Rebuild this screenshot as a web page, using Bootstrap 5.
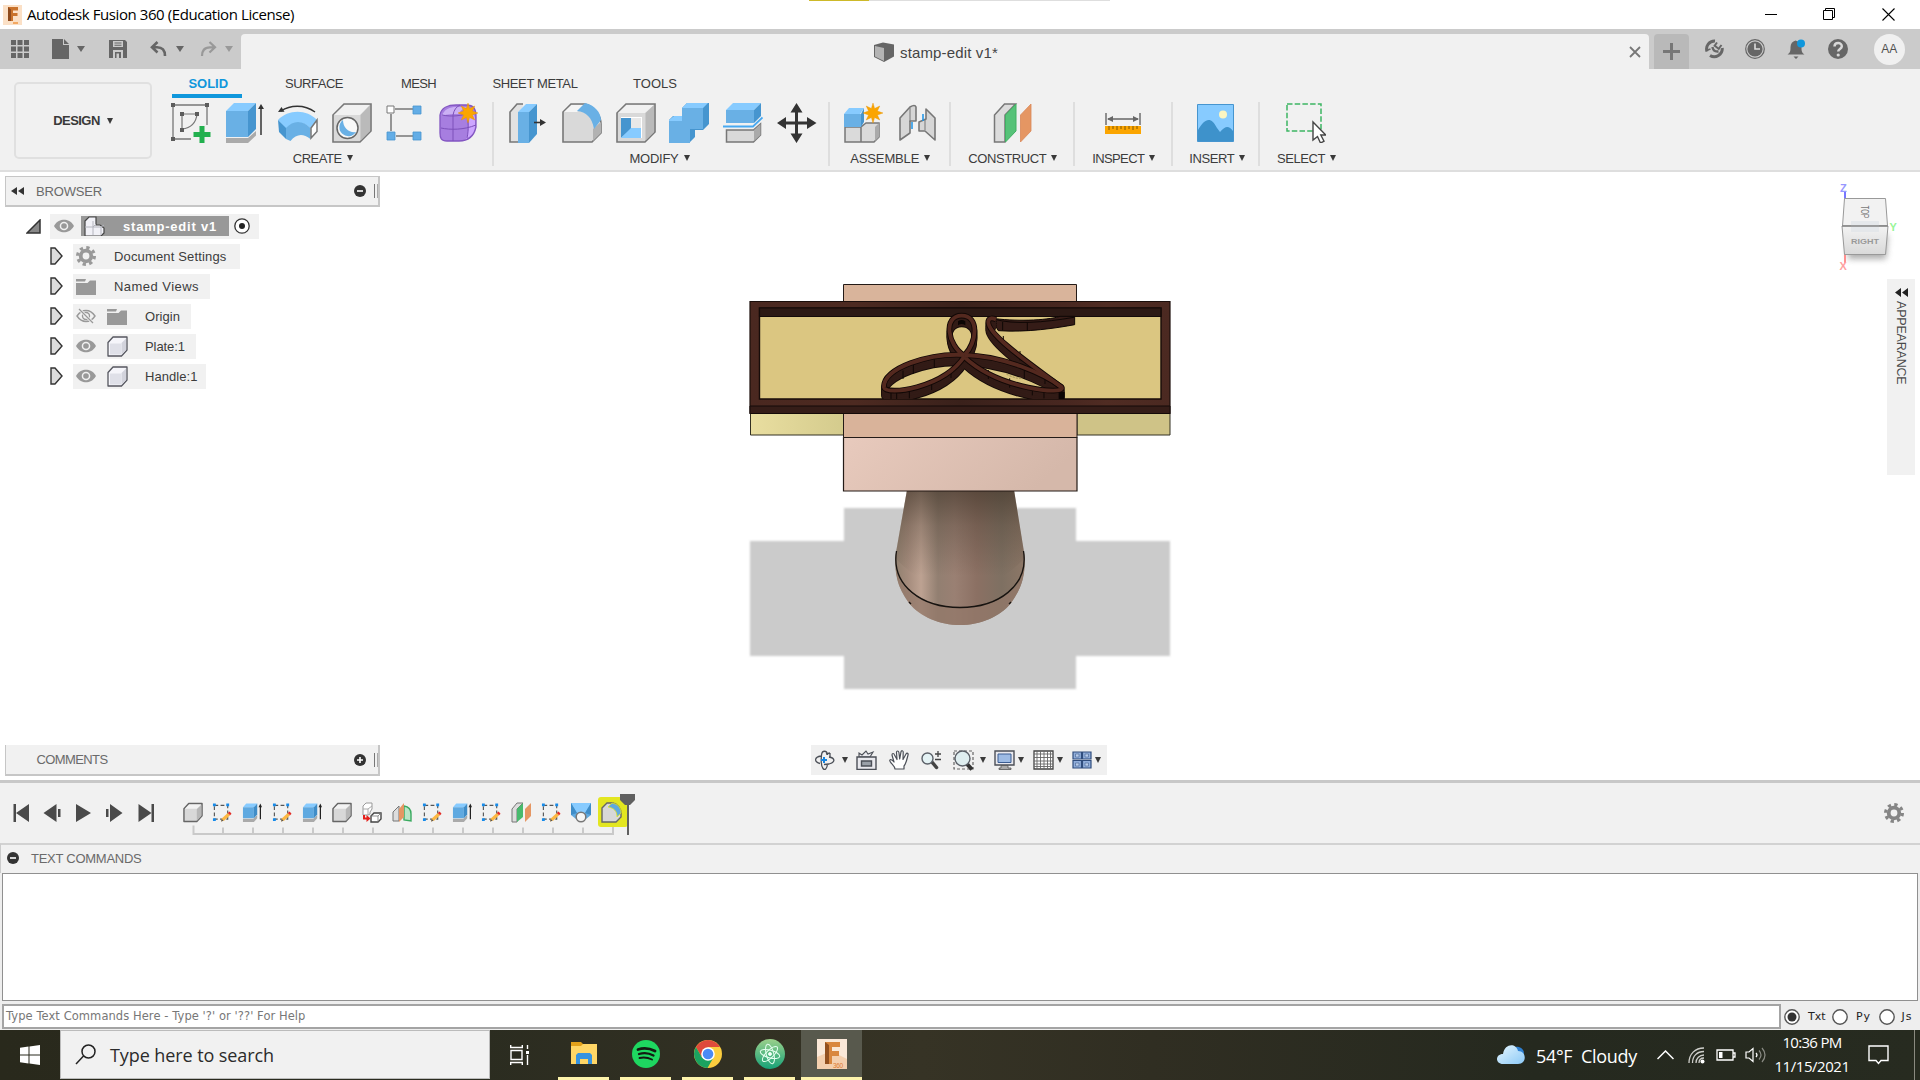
<!DOCTYPE html>
<html lang="en">
<head>
<meta charset="utf-8">
<title>Autodesk Fusion 360 (Education License)</title>
<link rel="stylesheet" href="https://cdn.jsdelivr.net/npm/bootstrap@5.3.0/dist/css/bootstrap.min.css">
<style>
body{width:1920px;height:1080px;overflow:hidden;background:#fff;font-family:"Liberation Sans",Arial,sans-serif;font-size:13px;line-height:1;color:#3c3c3c}
svg{display:block;flex:none}
.fit{white-space:pre;display:inline-block;flex:none}
.segoe{font-family:"Open Sans","Noto Sans",sans-serif}
.caret{width:0;height:0;flex:none;border:3.5px solid transparent;border-top:6px solid #3a3a3a;border-bottom:0}
.titlebar{height:29px;padding-left:3px;color:#000;font-size:15px}
.load-strip{left:809px;width:301px;height:1px;background:linear-gradient(90deg,#cdb929 60px,#dedede 60px)}
.winbtns{gap:46px;padding-right:25px}
.appbar{height:40px;background:#cbcbcb;color:#666}
.quick{width:241px;padding:0 0 1px 11px}
.quick .caret{border-top-color:#666;border-left-width:4px;border-right-width:4px}
.quick .dim{border-top-color:#999!important}
.doctab{width:1408px;height:35px;background:#f1f1f1;border-radius:4px 4px 0 0;font-size:15px;color:#444;padding-left:633px;padding-right:8px}
.newtab{width:35px;height:35px;margin-left:5px;background:#b9b9b9;border-radius:4px 4px 0 0}
.tabright{gap:21.2px;padding:0 0 0 15px;height:40px}
.avatar{width:31px;height:31px;background:#f0f0f0;margin-left:5px;font-size:12px;color:#505050}
.ribbon{height:103px;background:#f1f1f1;border-bottom:2px solid #dedede;padding-left:14px}
.design{width:138px;height:77px;margin-top:13px;border:2px solid #e0e0e0;border-radius:5px;gap:7px;font-weight:bold;color:#3a3a3a}
.ribtabs{height:29px;padding-left:20px}
.ribtabs .tab-on{color:#0f97dc;font-weight:bold;border-bottom:4px solid #0f97dc;width:70px;height:29px;padding:7.500px 0 0 16.5px}
.ribtabs .tab-off{padding-top:7.500px}
.tools{margin-top:4px}
.tgroup{height:64px;border-right:2px solid #dedede;width:var(--gw)}
.tgroup:last-child{border:0}
.tgroup .glyphs{height:42px;gap:13.7px;padding-top:1px}
.tgroup .gname{gap:5px;height:28px;padding-left:2px}
.viewport3d{height:608px;background:#fff}
.model{left:740px;top:98px}
.leftcol{width:375px;margin-left:5px;padding:4px 0 4px}
.panelhead{height:31px;background:#f1f1f1;border:1px solid #c6c6c6;border-width:1px 2px 2px 1px;color:#6a6a6a;padding-right:0}
.grip{width:4px;height:14px;border-left:1px solid #777;border-right:1px solid #aaa}
.tree{margin-top:6.500px;gap:5px}
.tree .trow{height:25px}
.tree .fit{padding-top:1px}
.tree .tbg{background:#f1f1f1;height:25px;padding-left:3px;width:var(--bw)}
.rootname{background:#989898;color:#fff;font-weight:bold;height:20px;width:148px;padding-left:3px}
.navbar3d{width:296px;height:30px;background:#f0f0f0;left:811px;top:573px}
.navbar3d .caret{border-left-width:3px;border-right-width:3px}
.viewcube{left:1830px;top:8px}
.appear{left:1887px;top:107px;width:28px;height:196px;background:#f1f1f1;padding-top:9px}
.appear .vert{writing-mode:vertical-rl;font-size:12.5px;letter-spacing:-.2px;color:#4a4a4a;margin-top:4px}
.timeline{height:63px;background:#f1f1f1;border-top:3px solid #c8c8c8}
.transport{padding:21px 0 0 13px;width:181px}
.steps{padding-top:18.500px}
.steps .icons{height:21px;gap:9.9px;padding-left:1.500px}
.feature-hl{width:30px;height:30px;background:#e3e620;border-radius:3px;left:417px;top:14px}
.cmdhead{height:30px;background:#f1f1f1;border-top:2px solid #d2d2d2;border-left:1px solid #ccc;color:#6a6a6a;padding:0 0 2px 6px}
.cmdwrap{height:157px;background:#eee;padding:0 2px}
.cmdout{height:128px;background:#fff;border:1.500px solid #909090}
.cmdin{height:25px;margin-top:3px}
.cmdline{width:1779px;height:25px;background:#fff;border:2px solid #a4a4a4;color:#777;padding:1px 0 0 2px;font-family:"DejaVu Sans",sans-serif;font-size:11.5px}
.opt{font-family:"DejaVu Sans",sans-serif;font-size:11px;color:#222}
.taskbar{height:50px;background:linear-gradient(90deg,#29291c,#2b2c20 25%,#363325 48%,#302e22 60%,#25291f 80%,#272b20)}
.search{width:430px;height:49px;background:#f1f1f1;border:1px solid #bbb;color:#2b2b2b;font-size:18px;padding-left:14px;gap:14px;margin-left:20px}
.app{width:51px;height:50px;border-bottom:3px solid #fdf3ab;padding-bottom:0}
.app-on{width:61px;background:#58594d}
.tray{color:#fff;font-size:18px}
.clock{font-size:15px;gap:9px;width:76px}
</style>
<script src="https://cdn.jsdelivr.net/npm/bootstrap@5.3.0/dist/js/bootstrap.bundle.min.js"></script>
</head>
<body class="d-flex flex-column">
<svg width="0" height="0" class="position-absolute">
<defs>
<symbol id="i-star" viewBox="0 0 20 20"><path d="M10 0l1.600 5.500L16.800 3l-2.400 5L20 10l-5.600 2 2.400 5-5.200-2.500L10 20l-1.600-5.500L3.200 17l2.400-5L0 10l5.600-2-2.400-5 5.200 2.500z" fill="#fba500" stroke="#e59200" stroke-width=".4"/></symbol>
<symbol id="i-eye" viewBox="0 0 20 14"><path d="M0 7C3 2 6.500.8 10 .8S17 2 20 7c-3 5-6.500 6.200-10 6.200S3 12 0 7z" fill="#999"/><circle cx="10" cy="7" r="4.300" fill="#f1f1f1"/><circle cx="10" cy="7" r="2.800" fill="#999"/></symbol>
<symbol id="i-eyeoff" viewBox="0 0 20 16"><path d="M1 8c3-4.500 6-5.500 9-5.500S16 3.500 19 8c-3 4.500-6 5.500-9 5.500S4 12.500 1 8z" fill="none" stroke="#999" stroke-width="1.400"/><circle cx="10" cy="8" r="3.500" fill="none" stroke="#999" stroke-width="1.400"/><path d="M3 1l14 14" stroke="#f1f1f1" stroke-width="3"/><path d="M3 1l14 14" stroke="#999" stroke-width="1.300"/></symbol>
<symbol id="i-folder" viewBox="0 0 20 17"><path d="M0 5h11.500L14 2.500h6V17H0z" fill="#999"/><path d="M0 1h10l-1 2.500H0z" fill="#999"/></symbol>
<symbol id="i-gear" viewBox="0 0 20 20"><circle cx="10" cy="10" r="8.400" fill="none" stroke="currentColor" stroke-width="3.200" stroke-dasharray="3.300 3.300"/><circle cx="10" cy="10" r="5.300" fill="none" stroke="currentColor" stroke-width="3.800"/></symbol>
<symbol id="i-body" viewBox="0 0 21 21"><path d="M1 6.500L6 1h14v13l-5.500 6H1z" fill="#f5f5fa" stroke="#55565f" stroke-width="1.300" stroke-linejoin="round"/><path d="M3 7.500h11v11H3z" fill="#dfe0e8"/><path d="M14.500 7v12L19 14V2.500z" fill="#d2d3dc"/></symbol>
<symbol id="i-box" viewBox="0 0 21 21"><path d="M1 6.500L6 1h14v13l-5.500 6H1z" fill="#d8d8d8" stroke="#666" stroke-width="1.500" stroke-linejoin="round"/><path d="M2 6.500L6.500 2H19l-4.500 4.500z" fill="#f3f3f3"/><path d="M14.500 7v12.500L19.300 14V2.500z" fill="#b7b7b7"/></symbol>
<symbol id="i-tri" viewBox="0 0 13 18"><path d="M1 1h4l7 8-7 8H1z" fill="#dcdcdc" stroke="#333" stroke-width="1.400"/></symbol>
<symbol id="i-tsketch" viewBox="0 0 21 21"><rect x="2.500" y="3" width="14" height="14.500" fill="none" stroke="#555" stroke-width="1.200" stroke-dasharray="4 2.500"/><path d="M1 1h3v3H1zM15 1h3v3h-3zM1 16.500h3v3H1z" fill="#168bea"/><path d="M9.500 20l1-3.500 6-5.500 2.500 2.500-6 5.500z" fill="#fbb743"/><path d="M16.500 11l2-1.500 2 2.200L19 13.500z" fill="#e42b25"/><path d="M9.500 20l.8-2.600 1.800 1.800z" fill="#555"/></symbol>
<symbol id="i-textrude" viewBox="0 0 21 21"><path d="M1 17h11l4-4v3.500L12.500 20.500H1z" fill="#aaa"/><path d="M1 5L4.500 1H16L12.500 5z" fill="#87cbff"/><path d="M1 5h11.500v11.500H1z" fill="#5fa9e0"/><path d="M12.500 5L16 1v11.500l-3.500 4z" fill="#3f8dc8"/><path d="M19.300 4v13.500" stroke="#222" stroke-width="1.300"/><path d="M17.300 5l2-4 1.700 4z" fill="#222"/></symbol>
</defs>
</svg>

<header class="titlebar d-flex align-items-center position-relative">
  <div class="load-strip position-absolute top-0"></div>
  <svg width="19" height="20" viewBox="0 0 19 20"><rect width="19" height="20" fill="#fbe0c6"/><path d="M5 2h10v3.500h-5v2.500h4.500V11H10v5H5z" fill="#c9722b"/><path d="M5 2l3 2.500V16H5z" fill="#8d4a1d"/><path d="M10 17h5v2h-5z" fill="#f3a862"/></svg>
  <span class="fit segoe ms-1" style="padding-left:1px" data-w="267">Autodesk Fusion 360 (Education License)</span>
  <div class="winbtns d-flex ms-auto align-items-center">
    <svg width="13" height="13" viewBox="0 0 13 13"><path d="M1 6h12v1H1z"/></svg>
    <svg width="13" height="13" viewBox="0 0 13 13" fill="none" stroke="#000"><path d="M.5 2.500h9v9h-9zM2.500 2.500v-2h9v9h-2"/></svg>
    <svg width="13" height="13" viewBox="0 0 13 13" stroke="#000" stroke-width="1.100"><path d="M.5.500l12 12M12.500.500l-12 12"/></svg>
  </div>
</header>

<nav class="appbar d-flex align-items-end">
  <div class="quick d-flex align-items-center h-100">
    <svg width="18" height="18" viewBox="0 0 18 18" fill="#666"><path d="M0 0h5v5H0zM6.500 0h5v5h-5zM13 0h5v5h-5zM0 6.500h5v5H0zM6.500 6.500h5v5h-5zM13 6.500h5v5h-5zM0 13h5v5H0zM6.500 13h5v5h-5zM13 13h5v5h-5z"/></svg>
    <svg style="margin-left:23px" width="17" height="20" viewBox="0 0 17 20" fill="#666"><path d="M0 0h11v6h6v14H0zM12 0l5 5h-5z"/></svg>
    <span class="caret ms-2"></span>
    <svg style="margin-left:23.500px" width="18" height="18" viewBox="0 0 18 18"><path d="M0 0h16l2 2v16H0z" fill="#666"/><path d="M4 1h10v6H4zM4 10h10v8H4z" fill="#cbcbcb"/><path d="M5.500 2.500h7v1h-7zM5.500 4.700h7v1h-7zM6 12h6v6H6z" fill="#666"/><path d="M7.500 13.500H10V18H7.500z" fill="#cbcbcb"/></svg>
    <svg style="margin-left:23px" width="17" height="16" viewBox="0 0 17 16" fill="none" stroke="#666" stroke-width="2.600"><path d="M7.500 1L2 6.300l5.500 5.200M2 6.300h5C13 6.300 15 9.500 15 15"/></svg>
    <span class="caret" style="margin-left:9px"></span>
    <svg class="ms-3" width="17" height="16" viewBox="0 0 17 16" fill="none" stroke="#999" stroke-width="2.200"><path d="M9.500 1L15 6.300l-5.500 5.200M15 6.300h-5C4 6.300 2 9.500 2 15"/></svg>
    <span class="caret dim ms-2"></span>
  </div>
  <div class="doctab d-flex align-items-center">
    <svg width="20" height="20" viewBox="0 0 20 20"><path d="M0 3l9-2.500L20 2.500v12L10 20 0 15z" fill="#666"/><path d="M1 4l9 2v13l-9-4.500z" fill="#b4b4b4"/></svg>
    <span class="fit" style="margin-left:6px;padding-top:1px" data-w="98">stamp-edit v1*</span>
    <svg class="ms-auto" width="12" height="12" viewBox="0 0 12 12" stroke="#777" stroke-width="1.800"><path d="M1 1l10 10M11 1L1 11"/></svg>
  </div>
  <div class="newtab d-flex align-items-center justify-content-center"><svg width="17" height="17" viewBox="0 0 17 17" fill="#777"><path d="M7 0h3v7h7v3h-7v7H7v-7H0V7h7z"/></svg></div>
  <div class="tabright d-flex align-items-center">
    <svg width="20" height="20" viewBox="0 0 20 20" fill="none" stroke="#666"><path d="M3 12.500A8 8 0 0 1 11 2M6 16.500A8 8 0 0 0 18.200 9" stroke-width="3"/><path d="M10.500 6.500l5 4M13 3.500l-3 4M17.500 6l-3 4" stroke-width="2"/><path d="M2 11.500l4.500-1.500" stroke-width="1.600"/><path d="M8.500 8q.5 5 6 4.500" stroke-width="2.400"/></svg>
    <svg width="20" height="20" viewBox="0 0 20 20"><circle cx="10" cy="10" r="9.300" fill="none" stroke="#666" stroke-width="1.200"/><circle cx="10" cy="10" r="7.600" fill="#666"/><path d="M10 4.500V10h5" stroke="#ddd" stroke-width="1.600" fill="none"/></svg>
    <svg width="20" height="20" viewBox="0 0 20 20"><path d="M1.500 15.500c3-2 3-4 3-7.500 0-3.500 2-5.500 5-6.500 3.500 1 6 3 6 6.500s0 5.500 3 7.500zM7.500 17.500h5L10 20z" fill="#666"/><circle cx="15" cy="4.500" r="4" fill="#0f97dc"/></svg>
    <svg width="20" height="20" viewBox="0 0 20 20"><circle cx="10" cy="10" r="10" fill="#666"/><path d="M6.500 7.500C6.500 3 13.800 3 13.800 7.300c0 2.700-3.600 2.700-3.600 5.200" fill="none" stroke="#d8d8d8" stroke-width="2.500"/><circle cx="10.200" cy="16" r="1.600" fill="#d8d8d8"/></svg>
    <div class="avatar rounded-circle d-flex align-items-center justify-content-center">AA</div>
  </div>
</nav>

<section class="ribbon d-flex">
  <div class="design d-flex align-items-center justify-content-center"><span class="fit" data-w="46.500">DESIGN</span><span class="caret"></span></div>
  <div>
    <div class="ribtabs d-flex">
      <div class="tab-on"><span class="fit" data-w="39.500">SOLID</span></div>
      <div class="tab-off" style="margin-left:43px"><span class="fit" data-w="58">SURFACE</span></div>
      <div class="tab-off" style="margin-left:58px"><span class="fit" data-w="35">MESH</span></div>
      <div class="tab-off" style="margin-left:56.500px"><span class="fit" data-w="85">SHEET METAL</span></div>
      <div class="tab-off" style="margin-left:55.500px"><span class="fit" data-w="44">TOOLS</span></div>
    </div>
    <div class="tools d-flex">
      <div class="tgroup" style="--gw:341.500px">
        <div class="glyphs d-flex justify-content-center" style="padding-left:7px">
          <svg width="40" height="40" viewBox="0 0 40 40"><path d="M2 2h34v20M2 2v34h18" fill="none" stroke="#777" stroke-width="1.300"/><path d="M11 11h15C25 21 19 25 11 26z" fill="none" stroke="#777" stroke-width="1.200"/><path d="M0 0h4v4H0zM34 0h4v4h-4zM0 34h4v4H0zM9 9h4v4H9zM24 9h4v4h-4zM9 25h4v4H9z" fill="#5c5c5c"/><path d="M28.500 23h5v6h6v5h-6v6h-5v-6h-6v-5h6z" fill="#22b04e"/></svg>
          <svg width="40" height="40" viewBox="0 0 40 40"><path d="M1 35h22l8-7v4.500l-8 7.500H1z" fill="#aaa"/><path d="M1 8l8-8h22l-8 8z" fill="#87cbff"/><path d="M1 8h22v26H1z" fill="#69b0e5"/><path d="M23 8l8-8v26l-8 8z" fill="#4695cf"/><path d="M36 4v28" stroke="#333" stroke-width="1.500"/><path d="M33 6l3-5 3 5z" fill="#333"/></svg>
          <svg width="40" height="40" viewBox="0 0 40 40"><path d="M3 8C12 2 26 1 37 9" fill="none" stroke="#333" stroke-width="1.500"/><path d="M0 9l3.500-5 3 4.800z" fill="#333"/><path d="M0 17C10 6 29 6 39 17l-6.500 8C25 18 15 18 8 26z" fill="#87cbff"/><path d="M8 25c7-8 17-8 24.500 0v11c-8-6-14-5-20 2l-4.500-2z" fill="#69b0e5"/><path d="M0 17l8 8v11L1 29z" fill="#4695cf"/><path d="M39 17l-6 8v10l6-6.500z" fill="#fff" stroke="#777" stroke-width="1.500"/></svg>
          <svg width="40" height="40" viewBox="0 0 40 40"><path d="M1 12L12 1h27v27L28 39H1z" fill="#d9d9d9" stroke="#777" stroke-width="1.600"/><path d="M2 12L12.500 2H38L28 12z" fill="#f1f1f1"/><path d="M28.500 12L38 2v26l-9.500 9.500z" fill="#bababa"/><circle cx="15.500" cy="25" r="10.500" fill="#f8f8f8" stroke="#666" stroke-width="1.500"/><path d="M11 17a9 9 0 1 0 13 12C17 30 11 25 11 17z" fill="#69b0e5"/></svg>
          <svg width="40" height="40" viewBox="0 0 40 40"><path d="M9 6h18M5 11v17M10 33h17" stroke="#777" stroke-width="1.500"/><path d="M1 3h7v7H1z" fill="#fff" stroke="#777"/><path d="M27 3h8v8h-8zM1 29h8v8H1zM27 29h8v8h-8z" fill="#63ade6" stroke="#4695cf" stroke-width=".8"/></svg>
          <svg width="40" height="40" viewBox="0 0 40 40"><path d="M1 12C2 5 9 2 17 2h10c8 0 10 4 10 12v10c-2 9-8 14-17 14H8c-6 0-7-3-7-8z" fill="#a77ee0" stroke="#8356c2" stroke-width="1.300"/><path d="M3 13C5 6 11 4 17 4h12c-5 1-7 3-9 7-6 0-12 0-17 2z" fill="#cbb0f4"/><path d="M30 12c5-2 6 1 6 4v8c-1 6-4 9-9 12 3-6 3-16 3-24z" fill="#cda6ff"/><path d="M2 25c9 2 23 2 35-3M14 38V12c1-5 3-8 7-10M3 12c10 2 20 1 30-3M28 35c2-8 1-18 0-24" fill="none" stroke="#7c50ba" stroke-width="1"/><use href="#i-star" x="19" y="0" width="20" height="20"/></svg>
        </div>
        <div class="gname d-flex align-items-center justify-content-center"><span class="fit" data-w="49">CREATE</span><span class="caret"></span></div>
      </div>
      <div class="tgroup" style="--gw:336px">
        <div class="glyphs d-flex justify-content-center ps-1">
          <svg width="40" height="40" viewBox="0 0 40 40"><path d="M15 1H9L2 9v30h8" fill="#e2e2e2" stroke="#777" stroke-width="1.600"/><path d="M10 9l8-8h11l-8 8z" fill="#87cbff"/><path d="M10 9h11v31H10z" fill="#69b0e5"/><path d="M21 9l8-8v30l-8 9z" fill="#4695cf"/><path d="M26 19.500h7" stroke="#333" stroke-width="1.600"/><path d="M32 16l6 3.500-6 3.500z" fill="#333"/></svg>
          <svg width="40" height="40" viewBox="0 0 40 40"><path d="M1 9l8-8h14c10 3 16 12 16 20v9l-9 9H1z" fill="#d9d9d9" stroke="#777" stroke-width="1.600"/><path d="M2 9l7.500-7H22l-7 7z" fill="#f5f5f5"/><path d="M31 26l8-7v11l-8 8z" fill="#b2b2b2"/><path d="M15 8l8-8c10 2 16 10 16 17l-7 9C30 14 24 9 15 8z" fill="#69b0e5"/></svg>
          <svg width="40" height="40" viewBox="0 0 40 40"><path d="M1 10L10 1h29v28L29 39H1z" fill="#d9d9d9" stroke="#777" stroke-width="1.600"/><path d="M2 10l8.500-8H38l-9 8z" fill="#f1f1f1"/><path d="M29.500 10L38 2v27l-8.500 8.500z" fill="#bababa"/><path d="M5 14h21v21H5z" fill="#fff"/><path d="M5 15h10v11L5 35z" fill="#4695cf"/><path d="M15 25h10v10H5z" fill="#87cbff"/><path d="M15 15h10v10H15z" fill="#e8e8e8"/></svg>
          <svg width="40" height="40" viewBox="0 0 40 40"><path d="M0 17l4-4h9V5l5-5h22v21l-6 6h-8v7l-6 6H0z" fill="#4695cf"/><path d="M0 18h13V5h21v21H21v14H0z" fill="#69b0e5"/><path d="M13 5l5-5h21l-5 5zM0 17l5-4h8v5H0z" fill="#87cbff"/></svg>
          <svg width="40" height="40" viewBox="0 0 40 40"><path d="M3 7l7-7h28l-7 7z" fill="#87cbff"/><path d="M3 7h28v13H3z" fill="#69b0e5"/><path d="M31 7l7-7v13l-7 7z" fill="#4695cf"/><path d="M0 23.500h30l9.500-9" fill="none" stroke="#48a9f1" stroke-width="1.800"/><path d="M3.500 27h27l7-6v11l-7 7h-27z" fill="#d9d9d9" stroke="#777" stroke-width="1.500"/><path d="M31 27l6.500-6v11L31 38z" fill="#aaa"/></svg>
          <svg width="40" height="40" viewBox="0 0 40 40" fill="#333"><path d="M19.500 0l6 9.500H21V18.500h9V14l9.500 6-9.500 6v-4.500h-9V30.500h4.500l-6 9.500-6-9.500H18v-9H9V26L0 20l9-6v4.500h9V9.500h-4.500z"/></svg>
        </div>
        <div class="gname d-flex align-items-center justify-content-center pe-1"><span class="fit" data-w="49">MODIFY</span><span class="caret"></span></div>
      </div>
      <div class="tgroup" style="--gw:121.500px">
        <div class="glyphs d-flex justify-content-center" style="padding-left:3px">
          <svg width="40" height="40" viewBox="0 0 40 40"><path d="M1 24h16v15H1zM17 24l5-4h13v14l-5 5H17z" fill="#dadada" stroke="#777" stroke-width="1.500"/><path d="M31 24l4-4v14l-4 4z" fill="#aaa"/><path d="M0 11l5-6h15l-4 6z" fill="#87cbff"/><path d="M0 11h17v13H0z" fill="#69b0e5"/><path d="M17 11l3-6v14l-3 5z" fill="#4695cf"/><use href="#i-star" x="19" y="0" width="20" height="20"/></svg>
          <svg width="40" height="40" viewBox="0 0 40 40"><path d="M2 15L12 4q5-3 6 0v14h-6v12L2 37zM37 15L28 6v10l-7 3v9h6l10 9z" fill="#d6d6d6" stroke="#777" stroke-width="1.600" stroke-linejoin="round"/><path d="M12 5v14M27 17v10" stroke="#777"/><path d="M14 19v7M25 11v7" stroke="#1b93e6" stroke-width="1.500"/></svg>
        </div>
        <div class="gname d-flex align-items-center justify-content-center"><span class="fit" data-w="69">ASSEMBLE</span><span class="caret"></span></div>
      </div>
      <div class="tgroup" style="--gw:123.500px">
        <div class="glyphs d-flex justify-content-center"><svg width="40" height="40" viewBox="0 0 40 40"><path d="M13 39H2.500V12L12.500 1h11L13 12z" fill="#dcdcdc" stroke="#777" stroke-width="1.500"/><path d="M13.500 12L24 1v27L13.500 39z" fill="#56c278" stroke="#41b063"/><path d="M28.500 12L39 1v27L28.500 39z" fill="#e59663" stroke="#d98858" stroke-width=".8"/></svg></div>
        <div class="gname d-flex align-items-center justify-content-center"><span class="fit" data-w="78">CONSTRUCT</span><span class="caret"></span></div>
      </div>
      <div class="tgroup" style="--gw:98.500px">
        <div class="glyphs d-flex justify-content-center" style="padding-left:1px"><svg width="40" height="40" viewBox="0 0 40 40"><path d="M3 10v12M37 10v12M5 16h30" stroke="#666" stroke-width="1.400"/><path d="M4 16l6-3v6zM36 16l-6-3v6z" fill="#666"/><path d="M2 23h36v8H2z" fill="#fba500"/><path d="M6 23v4M10 23v3M14 23v4M18 23v3M22 23v4M26 23v3M30 23v4M34 23v3" stroke="#805600"/></svg></div>
        <div class="gname d-flex align-items-center justify-content-center"><span class="fit" data-w="52">INSPECT</span><span class="caret"></span></div>
      </div>
      <div class="tgroup" style="--gw:86.500px">
        <div class="glyphs d-flex justify-content-center"><svg width="37" height="40" viewBox="0 0 37 40"><path d="M.5 1.500h36v37H.5z" fill="#87cbff" stroke="#4695cf"/><path d="M1 27C8 15 14 13 20 25l3 4c6-7 9-6 13-1v10H1z" fill="#3e92cb"/><circle cx="26" cy="11.500" r="4" fill="#fcf6c2"/></svg></div>
        <div class="gname d-flex align-items-center justify-content-center" style="padding-left:4px"><span class="fit" data-w="45">INSERT</span><span class="caret"></span></div>
      </div>
      <div class="tgroup" style="--gw:92px">
        <div class="glyphs d-flex justify-content-center"><svg width="40" height="40" viewBox="0 0 40 40"><rect x="1" y="1" width="34" height="27" fill="none" stroke="#3db563" stroke-width="1.500" stroke-dasharray="5.500 2.200"/><path d="M27 19v18l4.500-3.500 3 6.500 3.500-1.700-3.200-6.300h5z" fill="#fff" stroke="#444" stroke-width="1.400"/></svg></div>
        <div class="gname d-flex align-items-center justify-content-center"><span class="fit" data-w="48">SELECT</span><span class="caret"></span></div>
      </div>
    </div>
  </div>
</section>

<main class="viewport3d position-relative d-flex">
  <svg class="model position-absolute" width="440" height="430" viewBox="740 270 440 430">
    <defs>
      <filter id="soft"><feGaussianBlur stdDeviation="1"/></filter>
      <linearGradient id="pink" x1="0" y1="0" x2="1" y2=".25"><stop offset="0" stop-color="#e8cabd"/><stop offset="1" stop-color="#d5b8aa"/></linearGradient>
      <linearGradient id="hnd"><stop offset="0" stop-color="#90806f"/><stop offset=".1" stop-color="#a58c7d"/><stop offset=".2" stop-color="#bda292"/><stop offset=".33" stop-color="#927f71"/><stop offset=".46" stop-color="#9a8073"/><stop offset=".63" stop-color="#8b7063"/><stop offset=".82" stop-color="#7e7062"/><stop offset="1" stop-color="#8d7767"/></linearGradient>
      <linearGradient id="hshade" x1="0" y1="0" x2="0" y2="1"><stop offset="0" stop-color="#3c3024" stop-opacity=".62"/><stop offset=".35" stop-color="#3c3024" stop-opacity=".28"/><stop offset=".85" stop-color="#3c3024" stop-opacity="0"/></linearGradient>
      <linearGradient id="wood"><stop offset="0" stop-color="#4a2820"/><stop offset=".25" stop-color="#4d2a21"/><stop offset=".5" stop-color="#3a211b"/><stop offset=".75" stop-color="#482720"/><stop offset=".85" stop-color="#502c23"/><stop offset="1" stop-color="#4b2921"/></linearGradient>
      <linearGradient id="yl"><stop offset="0" stop-color="#e9dea0"/><stop offset="1" stop-color="#d4cb8d"/></linearGradient>
      <clipPath id="inner"><path d="M0 20h700v277H0z"/></clipPath>
      <g id="sig" fill="none" stroke-linejoin="round">
        <path d="M284 168C230 135 220 47 275 47C330 47 320 130 284 165"/>
        <path d="M284 165C180 158 36 205 42 262C48 288 220 266 284 168"/>
        <path d="M284 165C400 168 520 220 575 262C590 286 390 270 284 172"/>
        <path d="M575 262C500 205 350 105 355 64C357 52 370 55 378 58"/>
      </g>
    </defs>
    <path d="M844 508h232v33h94v115h-94v33H844v-33h-94V541h94z" fill="#cbcbcb" filter="url(#soft)"/>
    <path d="M907 490h107l11 68C1025 580 1020 590 1011 603C1000 617 980 625 960 625S920 617 909 603C900 590 895 580 895 558z" fill="url(#hnd)"/>
    <path d="M907 490h107l11 68q-65 66-130 0z" fill="url(#hshade)"/>
    <path d="M895.500 556C892 590 924 607.500 960 607.500S1028 590 1024.500 556C1025 580 1020 590 1011 603C1000 617 980 625 960 625S920 617 909 603C900 590 895 580 895.500 556z" fill="#93786a" fill-opacity=".75"/>
    <path d="M896.500 551C891 586 922 607.500 960 607.500S1029 586 1023.500 551M909 602l2 2M1009 604l2-2" fill="none" stroke="#171310" stroke-width="1.300"/>
    <path d="M843.500 284.500h233V303h-233z" fill="#d9b49b" stroke="#241b17"/>
    <path d="M750.500 413.500h93v21.500h-93z" fill="url(#yl)" stroke="#333022"/><path d="M1077 413.500h93v21.500h-93z" fill="#cfc387" stroke="#333022"/>
    <path d="M843.500 437.500h233.500v53.500H843.500z" fill="url(#pink)" stroke="#241b17" stroke-width="1.200"/>
    <path d="M843.500 413.500h233.500v24H843.500z" fill="#d9b39a" stroke="#241b17"/>
    <path d="M750 301.500h420v112H750z" fill="url(#wood)" stroke="#1b0e0b" stroke-width="1.200"/>
    <path d="M750 406h420v7.500H750z" fill="#351d18" stroke="#140a08"/>
    <path d="M759.500 308h401.500v91H759.500z" fill="#dbc681" stroke="#180c09" stroke-width="1.400"/>
    <path d="M759.500 308h401.500v8.500H759.500z" fill="#2c1914" stroke="#140a08" stroke-width="1.200"/>
    <g transform="translate(870 300) scale(.3333)" clip-path="url(#inner)">
      <path d="M362 54C430 65 530 62 570 49H614V74C560 84 470 98 385 92z" fill="#351c17" stroke="#0f0705" stroke-width="3"/>
      <path d="M375 58C430 74 520 68 612 52M398 66v25M472 67v26" fill="none" stroke="#0f0705" stroke-width="3"/>
      <g stroke="#140a08" stroke-width="17"><use href="#sig" y="26"/><use href="#sig" y="20"/><use href="#sig" y="14"/><use href="#sig" y="7"/></g>
      <g stroke="#321b16" stroke-width="13"><use href="#sig" y="25"/><use href="#sig" y="20"/><use href="#sig" y="14"/><use href="#sig" y="7"/></g>
      <path d="M264 64q11-8 22 0v12q-11-8-22 0z" fill="#0b0504"/>
      <path d="M63 277v20M80 277v20M118 270v25M185 245v25M243 210v24M130 193v28M193 178v24M99 212v25M355 210v27M419 235v28M487 258v28M522 265v30M463 208v28M400 108v28M450 153v28M525 228v24" stroke="#100806" stroke-width="3"/>
      <path d="M566 276h18v22h-18z" fill="#0b0504"/>
      <use href="#sig" stroke="#120806" stroke-width="17"/>
      <use href="#sig" stroke="#54291f" stroke-width="11.500"/>
      <path d="M410 222q20 14 48 13" stroke="#b2a163" stroke-width="4" stroke-dasharray="7 3" fill="none"/>
    </g>
  </svg>

  <div class="leftcol d-flex flex-column position-relative">
    <div class="panelhead d-flex align-items-center">
      <svg class="ms-1" style="padding-left:1px" width="14" height="8" viewBox="0 0 13 8"><path d="M6 0v8L0 4zM13 0v8L7 4z" fill="#333"/></svg>
      <span class="fit" style="margin-left:12px" data-w="66">BROWSER</span>
      <svg class="ms-auto" width="12" height="12" viewBox="0 0 12 12"><circle cx="6" cy="6" r="6" fill="#333"/><path d="M3 5.200h6v1.600H3z" fill="#fff"/></svg>
      <span class="grip" style="margin-left:8px"></span>
    </div>
    <div class="tree d-flex flex-column">
      <div class="trow d-flex align-items-center" style="padding-left:21px">
        <svg width="15" height="15" viewBox="0 0 15 15"><path d="M1 14L14 1v13z" fill="#888" stroke="#333" stroke-width="1.500"/></svg>
        <div class="tbg d-flex align-items-center" style="--bw:209px;margin-left:9px">
          <svg style="margin-left:1px" width="20" height="14"><use href="#i-eye"/></svg>
          <div class="rootname d-flex align-items-center" style="margin-left:7px"><svg width="21" height="20" viewBox="0 0 21 20"><path d="M1 5l4-4h7v8h4l4 3v5l-3 3H1z" fill="#f1f1f7" stroke="#444" stroke-width="1.200"/><path d="M9 19v-8h8v8M1 11h8M9 5v6M9 11l3-3M17 11l3-2" fill="none" stroke="#b4b5be"/></svg><span class="fit" style="margin-left:18px" data-w="94">stamp-edit v1</span></div>
          <svg style="margin-left:5px" width="16" height="16" viewBox="0 0 16 16"><circle cx="8" cy="8" r="7.200" fill="#fff" stroke="#333" stroke-width="1.300"/><circle cx="8" cy="8" r="3" fill="#222"/></svg>
        </div>
      </div>
      <div class="trow d-flex align-items-center" style="padding-left:44.500px"><svg width="13" height="18"><use href="#i-tri"/></svg><div class="tbg d-flex align-items-center" style="--bw:167px;margin-left:10.500px"><svg width="20" height="20" color="#999"><use href="#i-gear"/></svg><span class="fit" style="margin-left:18px" data-w="112.500">Document Settings</span></div></div>
      <div class="trow d-flex align-items-center" style="padding-left:44.500px"><svg width="13" height="18"><use href="#i-tri"/></svg><div class="tbg d-flex align-items-center" style="--bw:137px;margin-left:10.500px"><svg width="20" height="17"><use href="#i-folder"/></svg><span class="fit" style="margin-left:18px" data-w="85">Named Views</span></div></div>
      <div class="trow d-flex align-items-center" style="padding-left:44.500px"><svg width="13" height="18"><use href="#i-tri"/></svg><div class="tbg d-flex align-items-center" style="--bw:118px;margin-left:10.500px"><svg width="20" height="16"><use href="#i-eyeoff"/></svg><svg style="margin-left:11px" width="20" height="17"><use href="#i-folder"/></svg><span class="fit" style="margin-left:18px" data-w="35">Origin</span></div></div>
      <div class="trow d-flex align-items-center" style="padding-left:44.500px"><svg width="13" height="18"><use href="#i-tri"/></svg><div class="tbg d-flex align-items-center" style="--bw:123px;margin-left:10.500px"><svg width="20" height="14"><use href="#i-eye"/></svg><svg style="margin-left:11px" width="21" height="21"><use href="#i-body"/></svg><span class="fit" style="margin-left:17px" data-w="40">Plate:1</span></div></div>
      <div class="trow d-flex align-items-center" style="padding-left:44.500px"><svg width="13" height="18"><use href="#i-tri"/></svg><div class="tbg d-flex align-items-center" style="--bw:133px;margin-left:10.500px"><svg width="20" height="14"><use href="#i-eye"/></svg><svg style="margin-left:11px" width="21" height="21"><use href="#i-body"/></svg><span class="fit" style="margin-left:17px" data-w="52.500">Handle:1</span></div></div>
    </div>
    <div class="panelhead d-flex align-items-center mt-auto border-top-0">
      <span class="fit" style="margin-left:30.500px" data-w="71">COMMENTS</span>
      <svg class="ms-auto" width="12" height="12" viewBox="0 0 12 12"><circle cx="6" cy="6" r="6" fill="#333"/><path d="M3 5.200h2.200V3h1.600v2.200H9v1.600H6.800V9H5.200V6.800H3z" fill="#fff"/></svg>
      <span class="grip" style="margin-left:8px"></span>
    </div>
  </div>

  <div class="navbar3d position-absolute d-flex align-items-center ps-1">
    <svg width="20" height="20" viewBox="0 0 20 20" fill="none" stroke="#4b4f57" stroke-width="1.300"><path d="M12.500 5C12 0 7 0 6.500 5S6 16 8 18.500s4 0 4.500-4.500M6 6C-1 7-1 12 5 13.500M14 7c6 1 7 5 0 7l-5 .5"/><path d="M9 7v6M6 10h6" stroke="#1685e0" stroke-width="2"/><path d="M11 4l4-1M15 3v4" /></svg>
    <span class="caret" style="margin-left:7px"></span>
    <svg style="margin-left:7.500px" width="21" height="20" viewBox="0 0 21 20" fill="#e9e9ee" stroke="#4b4f57" stroke-width="1.400"><path d="M3 7V3l3 2 4-4 2 3 5-2-3 5z" stroke-width="1.100"/><path d="M1 7h19v12.500H1z"/><path d="M5.500 11h10v5h-10z" fill="#9aa0a8"/></svg>
    <svg style="margin-left:12px" width="21" height="20" viewBox="0 0 21 20" fill="#fff" stroke="#4b4f57" stroke-width="1.200" stroke-linejoin="round"><path d="M6 19c0-3-5-6-5.300-8.500C1 9 3 9.500 5 12L3 5c0-2 2-2 2.500 0L8 9.500 7.500 2.500c0-2 2-2 2.400 0l.8 6.500L12 1.800c.3-1.700 2.300-1.300 2.200.5L14 9.500 17 4c1-1.500 2.500-.5 2 1-1 4-2 9-4 11v3z"/></svg>
    <svg style="margin-left:11.500px" width="21" height="20" viewBox="0 0 21 20" fill="none"><path d="M10.500 11.500l5 6" stroke="#444" stroke-width="3.500" stroke-linecap="round"/><circle cx="6.500" cy="8.500" r="5.500" fill="#e4f2f4" stroke="#5b6068" stroke-width="1.400"/><path d="M17 1v6M14 4h6M14 9.500h6" stroke="#444" stroke-width="1.300"/></svg>
    <svg style="margin-left:11px" width="21" height="21" viewBox="0 0 21 21" fill="none"><path d="M1 1h19v18H1z" stroke="#666" stroke-width="1.200" stroke-dasharray="3 2"/><path d="M14 14l5 5.500" stroke="#333" stroke-width="4"/><circle cx="9.500" cy="8.500" r="7.500" fill="#dfeef0" stroke="#5b6068" stroke-width="1.400"/></svg>
    <span class="caret" style="margin-left:6px"></span>
    <svg style="margin-left:8px" width="21" height="20" viewBox="0 0 21 20"><path d="M1 1h19v14H1z" fill="#e9e9ee" stroke="#4b4f57" stroke-width="1.400"/><path d="M4 4h13v8.500H4z" fill="#9dbbe4" stroke="#3b5d92"/><path d="M7 15.500h7V18h3v1.500H5V18h2z" fill="#aaa" stroke="#555" stroke-width=".8"/></svg>
    <span class="caret" style="margin-left:3px"></span>
    <svg style="margin-left:9px" width="21" height="20" viewBox="0 0 21 20"><path d="M1 1h19v18H1z" fill="#fff" stroke="#444" stroke-width="1.300"/><path d="M4 1v18M7.500 1v18M11 1v18M14.500 1v18M17.500 1v18M1 4h19M1 7.500h19M1 11h19M1 14h19M1 16.500h19" stroke="#666" stroke-width=".9"/></svg>
    <span class="caret" style="margin-left:3px"></span>
    <svg style="margin-left:8.500px" width="20" height="18" viewBox="0 0 20 18" fill="#91aedb" stroke="#304d7d" stroke-width="1.200"><path d="M1 1h8.500v7H1zM10.500 1H19v7h-8.500zM1 9.500h8.500v7.500H1zM10.500 9.500H19V17h-8.500z"/><path d="M3.500 3h3.500v3H3.500zM13 3h3.500v3H13zM3.500 12h3.500v3H3.500zM13 12h3.500v3H13z" fill="#b8cdec" stroke-width=".5"/></svg>
    <span class="caret" style="margin-left:3px"></span>
  </div>

  <svg class="viewcube position-absolute" width="76" height="96" viewBox="1830 180 76 96" font-family="Liberation Sans,sans-serif">
    <defs><filter id="csh" x="-30%" y="-30%" width="170%" height="170%"><feGaussianBlur stdDeviation="3"/></filter><linearGradient id="cface" x1="0" y1="0" x2="0" y2="1"><stop offset="0" stop-color="#f3f3f3"/><stop offset="1" stop-color="#d9d9d9"/></linearGradient></defs>
    <path d="M1848 235h40l-2 24h-38z" fill="#777" opacity=".6" filter="url(#csh)"/>
    <path d="M1845 191v8" stroke="#7777ff" stroke-width="2"/><path d="M1845 254v9" stroke="#ff9090" stroke-width="2"/>
    <path d="M1844.500 198.500h41l2 27-45 .5z" fill="#f2f2f2" stroke="#999"/>
    <path d="M1842 226h46l-2.500 28.500h-41z" fill="url(#cface)" stroke="#999"/>
    <path d="M1851 221h28v11h-28z" fill="#dfe4e8" opacity=".7"/><path d="M1842 226h46" stroke="#888" stroke-width="1.300"/>
    <text x="1851" y="244" font-size="7.500" font-weight="bold" fill="#999" textLength="28" lengthAdjust="spacingAndGlyphs">RIGHT</text>
    <text transform="translate(1861 205.500) rotate(90) scale(.56 1)" font-size="11" fill="#777">TOP</text>
    <text x="1840" y="191.500" font-size="11" font-weight="bold" fill="#9898ff">Z</text><text x="1839.500" y="269.500" font-size="11" font-weight="bold" fill="#ffa2a2">X</text><text x="1889.500" y="230.500" font-size="11" font-weight="bold" fill="#98f598">Y</text>
  </svg>
  <div class="appear position-absolute d-flex flex-column align-items-center">
    <svg width="13" height="9" viewBox="0 0 13 9"><path d="M6 0v9L0 4.500zM13 0v9L7 4.500z" fill="#222"/></svg>
    <span class="vert">APPEARANCE</span>
  </div>
</main>

<section class="timeline d-flex">
  <div class="transport d-flex align-items-start">
    <svg width="142" height="18" viewBox="13 804 142 18" fill="#4a4a4a"><path d="M13.500 804h2.500v18h-2.500zM29 804v18l-13-9zM56.500 804v18l-13-9zM58 809h2.500v8H58zM76 804l15 9-15 9zM106 809h2.500v8H106zM110 804l12.500 9-12.500 9zM138.500 804l13 9-13 9zM151.500 804h2.500v18h-2.500z"/></svg>
  </div>
  <div class="steps position-relative">
    <div class="feature-hl position-absolute"></div>
    <div class="icons d-flex position-relative">
      <svg width="20" height="21"><use href="#i-box"/></svg>
      <svg width="20" height="21"><use href="#i-tsketch"/></svg>
      <svg width="20" height="21"><use href="#i-textrude"/></svg>
      <svg width="20" height="21"><use href="#i-tsketch"/></svg>
      <svg width="20" height="21"><use href="#i-textrude"/></svg>
      <svg width="20" height="21"><use href="#i-box"/></svg>
      <svg width="20" height="21" viewBox="0 0 20 21"><path d="M1 4l3-3h6v6l-2 3v2l-2 1H1z" fill="#fff" stroke="#999"/><path d="M1 7h5l4-3M6 7v6" fill="none" stroke="#aaa"/><path d="M9 14l3-3h7v6l-3 3H9z" fill="#fff" stroke="#444" stroke-width="1.400"/><path d="M9 14h7l3-3M16 14v6" fill="none" stroke="#777" stroke-width=".8"/><path d="M2 13v3.500h3" fill="none" stroke="#e5201b" stroke-width="2"/><path d="M4.500 13l4 3.500-4 3.500z" fill="#e5201b"/></svg>
      <svg width="20" height="21" viewBox="0 0 20 21"><path d="M1 19V10l6-6v15z" fill="#ddd" stroke="#777"/><path d="M12 18V4q7 1 7 8v7z" fill="#b9e5c7" stroke="#3aaa60" stroke-width="1.400"/><path d="M7 7l5-6v14l-5 5z" fill="#e59663"/></svg>
      <svg width="20" height="21"><use href="#i-tsketch"/></svg>
      <svg width="20" height="21"><use href="#i-textrude"/></svg>
      <svg width="20" height="21"><use href="#i-tsketch"/></svg>
      <svg width="20" height="21" viewBox="0 0 20 21"><path d="M6 20H1V7l5-6h6L6 7z" fill="#ddd" stroke="#777"/><path d="M6 7l6-6v14l-6 5z" fill="#47ba6d"/><path d="M14 7l6-6v13l-6 6z" fill="#e59663"/></svg>
      <svg width="20" height="21"><use href="#i-tsketch"/></svg>
      <svg width="20" height="21" viewBox="0 0 20 21"><path d="M0 1h20v12l-5 4H5l-5-4z" fill="#5fa9e0"/><path d="M0 1h20l-6 10H6z" fill="#87cbff"/><path d="M0 1l6 10-6 2zM20 1l-6 10 6 2z" fill="#3f8dc8"/><circle cx="10" cy="15" r="4.800" fill="#f6f6f6" stroke="#777" stroke-width="1.500"/></svg>
      <svg width="21" height="21" viewBox="0 0 21 21"><path d="M1 6l5-5h6c5 1 8 6 8 10v4l-5 5H1z" fill="#d8d8d8" stroke="#666" stroke-width="1.400"/><path d="M7 5l4-4c6 1 9 5 9 10l-4 4c0-6-3-9-9-10z" fill="#5fa9e0" stroke="#e3e620" stroke-width=".8"/></svg>
    </div>
    <svg width="440" height="12" viewBox="181 822.500 440 12"><path d="M193.500 825v8.500H613V826M223 827v6M253 827v6M283 827v6M313 827v6M343 827v6M373 827v6M403 827v6M433 827v6M463 827v6M493 827v6M523 827v6M553 827v6M583 827v6" fill="none" stroke="#c9c9c9" stroke-width="2"/></svg>
    <svg class="position-absolute" style="left:439px;top:11px" width="15" height="41" viewBox="0 0 15 41" fill="#606060"><path d="M0 0h15v6l-5 5v0H9v30H7V11H5L0 6z"/></svg>
  </div>
  <svg class="ms-auto me-3" style="margin-top:20px;color:#858585" width="20" height="20"><use href="#i-gear"/></svg>
</section>

<section>
  <div class="cmdhead d-flex align-items-center">
    <svg width="12" height="12" viewBox="0 0 12 12"><circle cx="6" cy="6" r="6" fill="#333"/><path d="M3 5.200h6v1.600H3z" fill="#fff"/></svg>
    <span class="fit" style="margin-left:12px" data-w="110.500">TEXT COMMANDS</span>
  </div>
  <div class="cmdwrap">
    <div class="cmdout"></div>
    <div class="cmdin d-flex align-items-center">
      <div class="cmdline d-flex align-items-center"><span class="fit" data-w="299.500">Type Text Commands Here - Type '?' or '??' For Help</span></div>
      <div class="opt d-flex align-items-center" style="margin-left:3px">
        <svg width="16" height="16" viewBox="0 0 16 16"><circle cx="8" cy="8" r="7.200" fill="#fff" stroke="#555" stroke-width="1.400"/><circle cx="8" cy="8" r="4.500" fill="#333"/></svg><span class="fit" style="margin-left:8px" data-w="17.500">Txt</span>
        <svg style="margin-left:6.500px" width="16" height="16" viewBox="0 0 16 16"><circle cx="8" cy="8" r="7.200" fill="#fff" stroke="#555" stroke-width="1.400"/></svg><span class="fit" style="margin-left:8px" data-w="15">Py</span>
        <svg style="margin-left:7.500px" width="16" height="16" viewBox="0 0 16 16"><circle cx="8" cy="8" r="7.200" fill="#fff" stroke="#555" stroke-width="1.400"/></svg><span class="fit" style="margin-left:7px" data-w="11">Js</span>
      </div>
    </div>
  </div>
</section>

<footer class="taskbar d-flex align-items-start segoe">
  <div class="d-flex align-items-center h-100" style="padding-left:20px"><svg width="20" height="20" viewBox="0 0 20 20" fill="#fff"><path d="M0 2.800L8.500 1.500v8H0zM9.500 1.400L20 0v9.500H9.500zM0 10.500h8.500v8L0 17.300zM9.500 10.500H20V20L9.500 18.600z"/></svg></div>
  <div class="search d-flex align-items-center">
    <svg width="21" height="21" viewBox="0 0 21 21" fill="none" stroke="#222" stroke-width="1.500"><circle cx="13.500" cy="7.500" r="6.500"/><path d="M8.500 12L1 20"/></svg>
    <span class="fit" data-w="164">Type here to search</span>
  </div>
  <div class="d-flex align-items-center h-100" style="width:68px;padding-left:20px"><svg width="20" height="20" viewBox="0 0 20 20" fill="none" stroke="#fff" stroke-width="1.400"><path d="M1 5.500h11v9H1zM.700 0v2.500h11.600V0M.700 20v-2.500h11.600V20M17.500 0v4M17.500 10v10"/><path d="M16 6h3v3h-3z" fill="#fff" stroke="none"/></svg></div>
  <div class="app d-flex align-items-center justify-content-center"><svg width="28" height="24" viewBox="0 0 28 24"><path d="M1 0h10l3 3v4H1z" fill="#e2a11b"/><path d="M1 4h10l2-2h14v20H1z" fill="#ffd666"/><path d="M6 22v-9l2-2h12l2 2v9h-4v-5h-8v5z" fill="#3693e0"/></svg></div>
  <div class="app d-flex align-items-center justify-content-center" style="margin-left:11px"><svg width="28" height="28" viewBox="0 0 28 28" fill="none" stroke="#141a12" stroke-linecap="round"><circle cx="14" cy="14" r="14" fill="#1ed760" stroke="none"/><path d="M6 9.500c6-2 12-1 17 1.500" stroke-width="2.800"/><path d="M7 14c5-1.500 10-1 14.500 1.500" stroke-width="2.300"/><path d="M7.500 18c4-1 8-.7 12.500 1.500" stroke-width="1.900"/></svg></div>
  <div class="app d-flex align-items-center justify-content-center" style="margin-left:11px"><svg width="28" height="28" viewBox="0 0 28 28"><circle cx="14" cy="14" r="14" fill="#fbcd3e"/><path d="M1.900 7A14 14 0 0 1 26.100 7H14l-6 10.500z" fill="#df4a3b"/><path d="M1.900 7A14 14 0 0 0 13.500 28l6-10.500L8 17.500z" fill="#1ba260"/><circle cx="14" cy="14" r="6.800" fill="#fff"/><circle cx="14" cy="14" r="5.300" fill="#4a8af4"/></svg></div>
  <div class="app d-flex align-items-center justify-content-center" style="margin-left:11px"><svg width="30" height="30" viewBox="0 0 30 30" fill="none" stroke="#e5fff0" stroke-width="1"><defs><linearGradient id="atm" x1="0" y1="0" x2="0" y2="1"><stop offset="0" stop-color="#9bd08b"/><stop offset="1" stop-color="#17a278"/></linearGradient></defs><circle cx="15" cy="15" r="15" fill="url(#atm)" stroke="none"/><ellipse cx="15" cy="15" rx="10" ry="3.800" transform="rotate(15 15 15)"/><ellipse cx="15" cy="15" rx="10" ry="3.800" transform="rotate(75 15 15)"/><ellipse cx="15" cy="15" rx="10" ry="3.800" transform="rotate(135 15 15)"/><circle cx="15" cy="15" r="1.500" fill="#fff"/></svg></div>
  <div class="app app-on d-flex align-items-center justify-content-center" style="margin-left:6px"><svg width="30" height="30" viewBox="0 0 30 30"><path d="M0 0h30v30H0z" fill="#fae8d8"/><path d="M0 18L14 12l16 8v10H0z" fill="#f4cfae"/><path d="M8 3h15v5h-8v4h7v5h-7v8H8z" fill="#d9873f"/><path d="M8 3l4 3v19H8z" fill="#93501f"/><text x="16" y="28.500" font-size="6.500" fill="#de7a32" font-family="Liberation Sans,sans-serif" textLength="10">360</text></svg></div>
  <div class="tray d-flex align-items-center h-100 ms-auto">
    <svg width="28" height="20" viewBox="0 0 28 20"><defs><linearGradient id="cld" x1="0" y1="0" x2="1" y2="1"><stop offset="0" stop-color="#e5f6ff"/><stop offset="1" stop-color="#8cc9f6"/></linearGradient></defs><path d="M18 2c6-1 11 4 8 9l-3 4z" fill="#2e7fd0"/><path d="M6 19c-8 0-8-10 0-10C8-2 19-2 21 6c9 0 9 13 0 13z" fill="url(#cld)"/></svg>
    <span class="fit" style="margin-left:11px;padding-top:2px" data-w="101">54°F  Cloudy</span>
    <svg style="margin-left:20px" width="17" height="10" viewBox="0 0 17 10" fill="none" stroke="#fff" stroke-width="1.500"><path d="M.5 9l8-8 8 8"/></svg>
    <svg style="margin-left:14px" width="17" height="17" viewBox="0 0 17 17" fill="none" stroke="#d0d0cc" stroke-width="1.300"><path d="M1 16C1 7 7 1 16 1M4.500 16C4.500 9 9 4.500 16 4.500M8 16c0-4.500 3.500-8 8-8M11 16c0-3 2-5 5-5"/><circle cx="14.500" cy="14.500" r="2" fill="#fff" stroke="none"/></svg>
    <svg style="margin-left:11px" width="20" height="12" viewBox="0 0 20 12"><path d="M1 1h16v10H1zM17.500 4H19v4h-1.500" fill="none" stroke="#fff" stroke-width="1.300"/><path d="M3 3h3.500v6H3z" fill="#fff"/></svg>
    <svg style="margin-left:9px" width="21" height="16" viewBox="0 0 21 16" fill="none" stroke="#fff" stroke-width="1.200"><path d="M1 5h3l4-3.500v13L4 11H1z"/><path d="M11 6q2 2 0 4"/><path d="M14 3.500q4 4.500 0 9M17 1q6 7 0 14" stroke="#8a8b84"/></svg>
    <div class="clock d-flex flex-column align-items-center" style="margin-left:8px;padding-bottom:2px"><span class="fit" data-w="59">10:36 PM</span><span class="fit" data-w="75">11/15/2021</span></div>
    <svg style="margin-left:18px" width="21" height="20" viewBox="0 0 21 20" fill="none" stroke="#fff" stroke-width="1.400"><path d="M1 1h19v14.500h-7L10.500 18.500 8 15.500H1z"/></svg>
    <div class="h-100" style="width:6px;margin-left:25px;border-left:1px solid #8a8a80"></div>
  </div>
</footer>
<script>
// Tune letter spacing so each label takes its design width.
document.querySelectorAll('.fit').forEach(function (el) {
  var pad = parseFloat(getComputedStyle(el).paddingLeft) || 0;
  var natural = el.getBoundingClientRect().width - pad;
  el.style.letterSpacing = (el.dataset.w - natural) / el.textContent.length + 'px';
});
</script>
</body>
</html>
